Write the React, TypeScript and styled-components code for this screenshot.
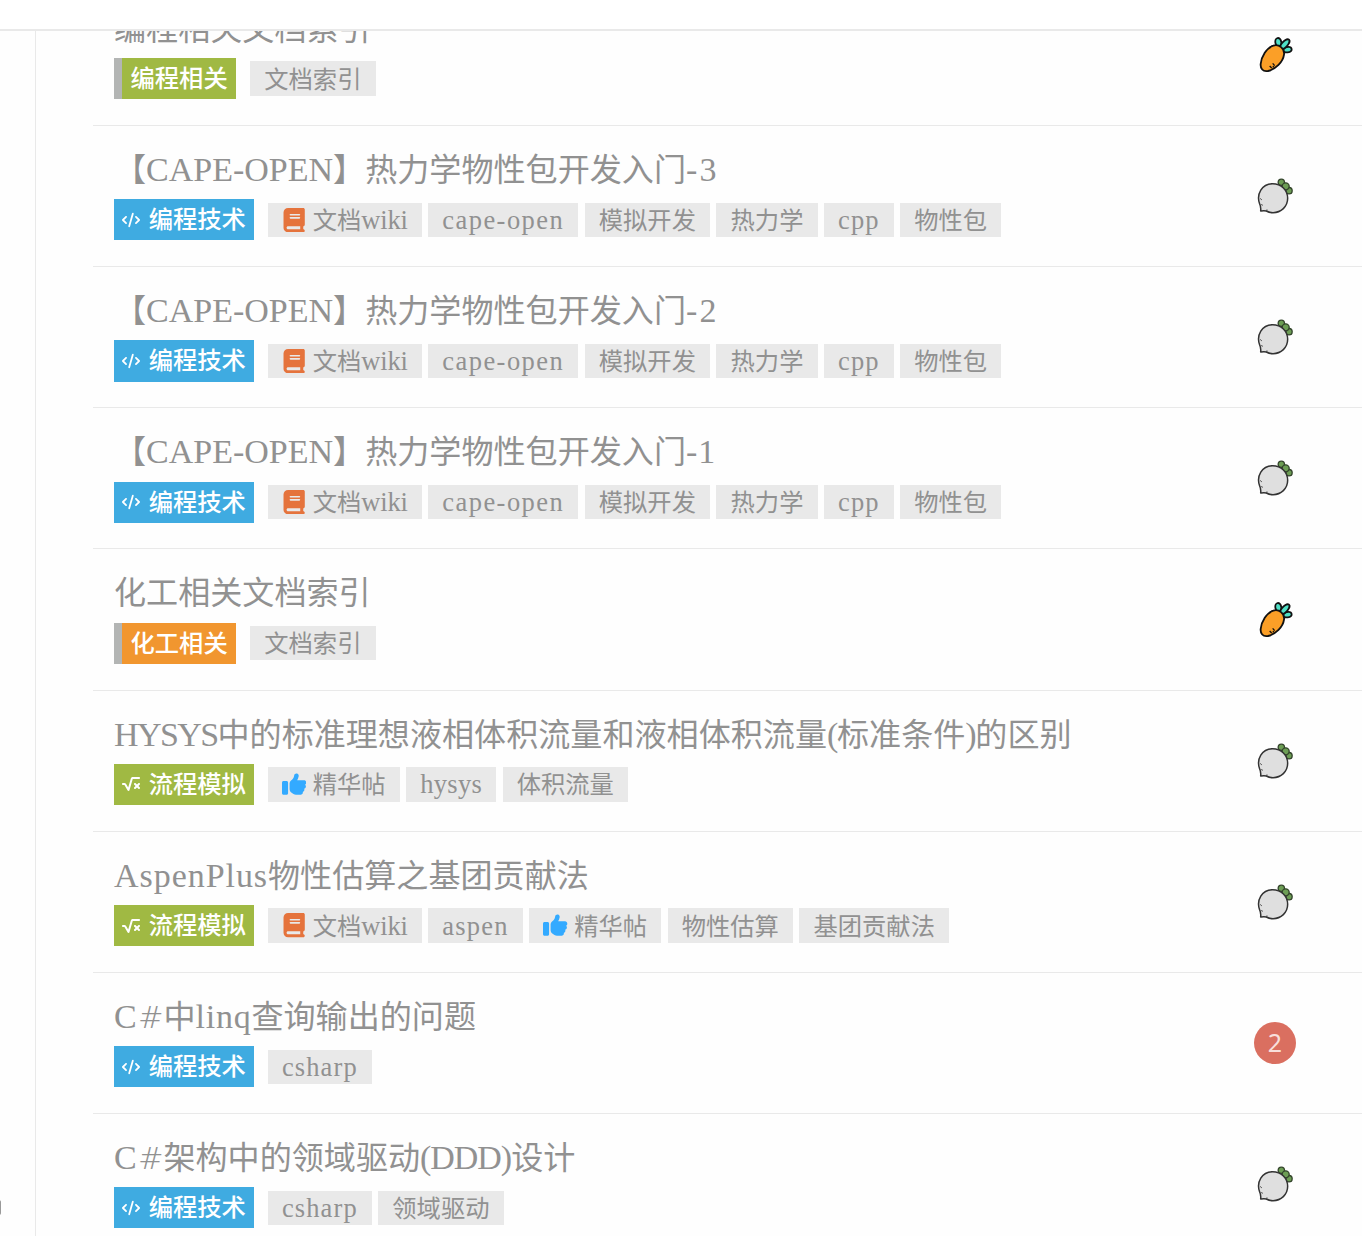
import React from "react"
import { FaBook, FaCode, FaSquareRootVariable, FaThumbsUp } from "react-icons/fa6"
import styled, { createGlobalStyle } from "styled-components"

const colors = {
  text: "#919191",
  line: "#e9e9e9",
  tag: "#e9e9e9",
  blue: "#3fabe1",
  green: "#a0b943",
  orange: "#f1962f",
  parent: "#b3b5b4",
  book: "#e5733c",
  like: "#33aaff",
  unread: "#da6f60",
}

// [text, letter spacing] for latin runs, plain strings for chinese ones
type Run = string | [string, number]

interface Category {
  name: string
  color: string
  icon?: "code" | "root"
}

interface Tag {
  runs: Run[]
  icon?: "book" | "like"
}

interface Topic {
  title: Run[]
  category: Category
  tags: Tag[]
  mark: "carrot" | "radish" | number
}

const coding: Category = { name: "编程技术", color: colors.blue, icon: "code" }
const simulation: Category = {
  name: "流程模拟",
  color: colors.green,
  icon: "root",
}

const wikiTag: Tag = { runs: ["文档", ["wiki", -0.2]], icon: "book" }
const bestTag: Tag = { runs: ["精华帖"], icon: "like" }
const indexTag: Tag = { runs: ["文档索引"] }
const csharpTag: Tag = { runs: [["csharp", 1.1]] }

const capeOpen = (part: Run): Topic => ({
  title: ["【", ["CAPE-OPEN", 0], "】热力学物性包开发入门", part],
  category: coding,
  tags: [
    wikiTag,
    { runs: [["cape-open", 1.45]] },
    { runs: ["模拟开发"] },
    { runs: ["热力学"] },
    { runs: [["cpp", 1.1]] },
    { runs: ["物性包"] },
  ],
  mark: "radish",
})

const topics: Topic[] = [
  {
    title: ["编程相关文档索引"],
    category: { name: "编程相关", color: colors.green },
    tags: [indexTag],
    mark: "carrot",
  },
  capeOpen(["-3", 2.3]),
  capeOpen(["-2", 2.3]),
  capeOpen(["-1", 1]),
  {
    title: ["化工相关文档索引"],
    category: { name: "化工相关", color: colors.orange },
    tags: [indexTag],
    mark: "carrot",
  },
  {
    title: [
      ["HYSYS", -1.6],
      "中的标准理想液相体积流量和液相体积流量",
      ["(", -1.3],
      "标准条件",
      [")", -1.3],
      "的区别",
    ],
    category: simulation,
    tags: [bestTag, { runs: [["hysys", 0.3]] }, { runs: ["体积流量"] }],
    mark: "radish",
  },
  {
    title: [["AspenPlus", 0.95], "物性估算之基团贡献法"],
    category: simulation,
    tags: [
      wikiTag,
      { runs: [["aspen", 1.25]] },
      bestTag,
      { runs: ["物性估算"] },
      { runs: ["基团贡献法"] },
    ],
    mark: "radish",
  },
  {
    title: [["C", 1.2], "#", "中", ["linq", 0.75], "查询输出的问题"],
    category: coding,
    tags: [csharpTag],
    mark: 2,
  },
  {
    title: [["C", 1.2], "#", "架构中的领域驱动", ["(DDD)", -1.05], "设计"],
    category: coding,
    tags: [csharpTag, { runs: ["领域驱动"] }],
    mark: "radish",
  },
]

const Runs: React.FC<{ runs: Run[]; size: number }> = ({ runs, size }) => (
  <RunLine>
    {runs.map((run, i) => {
      if (run === "#") {
        return <Sharp key={i}>#</Sharp>
      }
      return typeof run === "string" ? (
        <React.Fragment key={i}>{run}</React.Fragment>
      ) : (
        <Latin key={i} $size={size} $spacing={run[1]}>
          {run[0]}
        </Latin>
      )
    })}
  </RunLine>
)

const Carrot: React.FC = () => (
  <svg width="40" height="40" viewBox="45 45 120 120">
    <g stroke="#111" strokeWidth="5.5" strokeLinejoin="round">
      <ellipse cx="115" cy="67" rx="9" ry="13" fill="#4fe0c6" transform="rotate(-10 115 67)" />
      <ellipse cx="142" cy="89" rx="13" ry="8" fill="#4fe0c6" transform="rotate(-8 142 89)" />
      <ellipse cx="134" cy="73" rx="19" ry="8.5" fill="#4fe0c6" transform="rotate(-47 134 73)" />
      <path
        d="M100 77C116 71 135 86 132 104C129 126 107 148 84 153C68 156 61 145 62 132C64 109 80 83 100 77Z"
        fill="#fb9f27"
      />
      <path d="M89 138l6 6M98 130l6 7M98 142l4-3" fill="none" strokeWidth="4" />
    </g>
  </svg>
)

const Radish: React.FC = () => (
  <svg width="40" height="40" viewBox="45 32 120 120">
    <g stroke="#34452c" strokeWidth="4">
      <circle cx="124" cy="51" r="9.5" fill="#6c9d54" />
      <circle cx="147" cy="76" r="9.5" fill="#6c9d54" />
      <circle cx="137" cy="63" r="10.5" fill="#6c9d54" />
    </g>
    <path
      d="M62 137C63 128 62 122 59 116C48 86 66 55 98 55C124 55 143 75 143 99C143 124 123 142 99 142C91 142 84 140 79 137C73 135 68 136 62 137Z"
      fill="#dfdfdf"
      stroke="#333"
      strokeWidth="4.5"
      strokeLinejoin="round"
    />
    <path d="M60 99l6 5M62 117l7 3M80 137l1-5" stroke="#444" strokeWidth="2.5" fill="none" />
  </svg>
)

const TopicRow: React.FC<{ topic: Topic }> = ({ topic }) => {
  const { title, category, tags, mark } = topic

  return (
    <Row>
      <Info>
        <Title>
          <Runs runs={title} size={34} />
        </Title>
        <Labels>
          <CategoryBadge $color={category.color} $child={!category.icon}>
            {category.icon === "code" && <FaCode size={18} />}
            {category.icon === "root" && <FaSquareRootVariable size={18} />}
            <CategoryName>{category.name}</CategoryName>
          </CategoryBadge>
          <TagList>
            {tags.map((tag, i) => (
              <TagBox key={i}>
                {tag.icon === "book" && <FaBook size={24.3} color={colors.book} />}
                {tag.icon === "like" && <FaThumbsUp size={24.3} color={colors.like} />}
                <Runs runs={tag.runs} size={26.5} />
              </TagBox>
            ))}
          </TagList>
        </Labels>
      </Info>
      <Mark>
        {mark === "carrot" && <Carrot />}
        {mark === "radish" && <Radish />}
        {typeof mark === "number" && <Unread>{mark}</Unread>}
      </Mark>
    </Row>
  )
}

const App: React.FC = () => (
  <>
    <GlobalStyle />
    <Page>
      <Header />
      <Body>
        <Sidebar>
          <Handle />
        </Sidebar>
        <List>
          {topics.map((topic, i) => (
            <TopicRow key={i} topic={topic} />
          ))}
        </List>
      </Body>
    </Page>
  </>
)

export default App

const GlobalStyle = createGlobalStyle`
  * {
    box-sizing: border-box;
  }

  body {
    margin: 0;
    background: #fefefe;
    color: ${colors.text};
    font-family: "Noto Sans CJK SC", sans-serif;
  }
`

const Page = styled.div`
  height: 1236px;
  display: flex;
  flex-direction: column;
  overflow: hidden;
`

const Header = styled.header`
  flex: none;
  height: 31px;
  background: #fff;
  border-bottom: 2px solid ${colors.line};
`

const Body = styled.div`
  flex: 1;
  min-height: 0;
  display: flex;
  overflow: hidden;
`

const Sidebar = styled.aside`
  position: relative;
  flex: none;
  width: 36px;
  border-right: 1px solid ${colors.line};
`

const Handle = styled.div`
  position: absolute;
  left: -6px;
  top: 1169px;
  width: 7px;
  height: 15px;
  border-radius: 2px;
  background: #999;
`

const List = styled.main`
  flex: 1;
  min-width: 0;
  margin: -46.15px 0 0 57px;
`

const Row = styled.article`
  height: 141.17px;
  display: grid;
  grid-template-columns: 1fr 174px;
  align-items: center;
  border-bottom: 1px solid ${colors.line};
`

const Info = styled.div`
  align-self: start;
  padding: 17px 0 0 21px;
`

const Title = styled.h2`
  margin: 0;
  height: 48px;
  font-size: 32.1px;
  font-weight: 400;
  line-height: 48px;
  white-space: nowrap;
`

const RunLine = styled.span`
  display: block;
`

const Latin = styled.span<{ $size: number; $spacing: number }>`
  font-family: "Liberation Serif", serif;
  font-size: ${({ $size }) => $size}px;
  line-height: 1;
  letter-spacing: ${({ $spacing }) => $spacing}px;
`

const Sharp = styled.span`
  font-family: "DejaVu Sans", sans-serif;
  font-size: 30.5px;
  font-weight: 200;
  line-height: 1;
`

const Labels = styled.div`
  margin-top: 8.2px;
  display: flex;
  align-items: center;
  gap: 14px;
  white-space: nowrap;
`

const CategoryBadge = styled.span<{ $color: string; $child: boolean }>`
  height: 41.2px;
  padding: 0 ${({ $child }) => ($child ? 8.5 : 8)}px;
  display: flex;
  align-items: center;
  gap: 8.7px;
  border-left: ${({ $child }) => ($child ? `8px solid ${colors.parent}` : "0")};
  background: ${({ $color }) => $color};
  color: #fff;
  font-size: 24.3px;
  font-weight: 500;
`

const CategoryName = styled.span`
  padding-bottom: 4px;
  line-height: 37px;
`

const TagList = styled.div`
  display: flex;
  gap: 6.4px;
`

const TagBox = styled.span`
  height: 34.4px;
  padding: 0 14.1px;
  display: flex;
  align-items: center;
  gap: 6.5px;
  background: ${colors.tag};
  font-size: 24.3px;
  line-height: 32px;

  ${RunLine} {
    padding-bottom: 2px;
  }
`

const Mark = styled.div`
  display: flex;
  align-items: center;
  justify-content: center;
`

const Unread = styled.span`
  width: 42px;
  height: 42px;
  border-radius: 50%;
  background: ${colors.unread};
  color: #f8dfdb;
  font-family: "Noto Sans", sans-serif;
  font-size: 25px;
  line-height: 40px;
  text-align: center;
`
